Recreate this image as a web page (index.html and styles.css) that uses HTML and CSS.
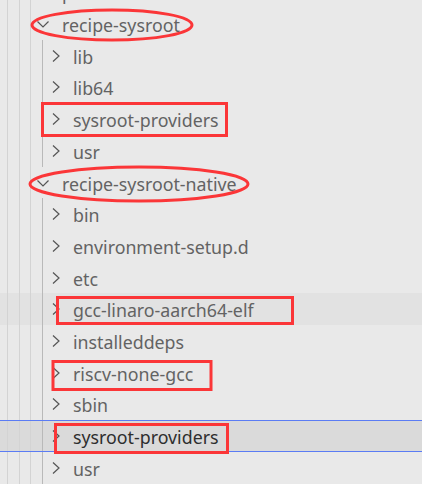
FILE: index.html
```html
<!DOCTYPE html>
<html>
<head>
<meta charset="utf-8">
<link rel="stylesheet" href="styles.css">
</head>
<body>
<div class="explorer">
  <ul class="tree">
    <li class="row d1"><svg class="twist" viewBox="0 0 16 16"><path d="M5 2.5L11 8L5 13.5"/></svg><span class="label">pseudo</span></li>
    <li class="row d1"><svg class="twist" viewBox="0 0 16 16"><path d="M2.5 5.5L8 11L13.5 5.5"/></svg><span class="label">recipe-sysroot</span></li>
    <li class="row d2"><svg class="twist" viewBox="0 0 16 16"><path d="M5 2.5L11 8L5 13.5"/></svg><span class="label">lib</span></li>
    <li class="row d2"><svg class="twist" viewBox="0 0 16 16"><path d="M5 2.5L11 8L5 13.5"/></svg><span class="label">lib64</span></li>
    <li class="row d2"><svg class="twist" viewBox="0 0 16 16"><path d="M5 2.5L11 8L5 13.5"/></svg><span class="label">sysroot-providers</span></li>
    <li class="row d2"><svg class="twist" viewBox="0 0 16 16"><path d="M5 2.5L11 8L5 13.5"/></svg><span class="label">usr</span></li>
    <li class="row d1"><svg class="twist" viewBox="0 0 16 16"><path d="M2.5 5.5L8 11L13.5 5.5"/></svg><span class="label">recipe-sysroot-native</span></li>
    <li class="row d2"><svg class="twist" viewBox="0 0 16 16"><path d="M5 2.5L11 8L5 13.5"/></svg><span class="label">bin</span></li>
    <li class="row d2"><svg class="twist" viewBox="0 0 16 16"><path d="M5 2.5L11 8L5 13.5"/></svg><span class="label">environment-setup.d</span></li>
    <li class="row d2"><svg class="twist" viewBox="0 0 16 16"><path d="M5 2.5L11 8L5 13.5"/></svg><span class="label">etc</span></li>
    <li class="row d2 hover"><svg class="twist" viewBox="0 0 16 16"><path d="M5 2.5L11 8L5 13.5"/></svg><span class="label">gcc-linaro-aarch64-elf</span></li>
    <li class="row d2"><svg class="twist" viewBox="0 0 16 16"><path d="M5 2.5L11 8L5 13.5"/></svg><span class="label">installeddeps</span></li>
    <li class="row d2"><svg class="twist" viewBox="0 0 16 16"><path d="M5 2.5L11 8L5 13.5"/></svg><span class="label">riscv-none-gcc</span></li>
    <li class="row d2"><svg class="twist" viewBox="0 0 16 16"><path d="M5 2.5L11 8L5 13.5"/></svg><span class="label">sbin</span></li>
    <li class="row d2 selected"><svg class="twist" viewBox="0 0 16 16"><path d="M5 2.5L11 8L5 13.5"/></svg><span class="label">sysroot-providers</span></li>
    <li class="row d2"><svg class="twist" viewBox="0 0 16 16"><path d="M5 2.5L11 8L5 13.5"/></svg><span class="label">usr</span></li>
  </ul>
  <svg class="marks" viewBox="0 0 422 484" width="422" height="484">
    <ellipse cx="112" cy="25" rx="80" ry="15"/>
    <ellipse cx="139" cy="184" rx="109" ry="17"/>
    <rect x="42.5" y="103.5" width="184" height="32"/>
    <rect x="57.5" y="297.5" width="235" height="26"/>
    <rect x="53" y="361.5" width="158" height="28"/>
    <rect x="55.5" y="424.5" width="172" height="28"/>
  </svg>
</div>
</body>
</html>
```
FILE: styles.css
```css
html, body {
  margin: 0;
  padding: 0;
  background: #e9e9e9;
}
.explorer {
  position: relative;
  width: 422px;
  height: 484px;
  overflow: hidden;
  font-family: "Noto Sans", "Open Sans", sans-serif;
  font-size: 17.8px;
  color: #636363;
}
.tree {
  list-style: none;
  margin: -23.57px 0 0 0;
  padding: 0;
}
.row {
  display: flex;
  align-items: center;
  height: 31.71px;
  box-sizing: border-box;
  white-space: nowrap;
  background-repeat: no-repeat;
}
.d1 {
  padding-left: 35px;
  background-image:
    linear-gradient(#d3d3d3, #d3d3d3),
    linear-gradient(#d3d3d3, #d3d3d3),
    linear-gradient(#d3d3d3, #d3d3d3);
  background-position: 7px 0, 19px 0, 30px 0;
  background-size: 1px 100%, 1px 100%, 1px 100%;
}
.d2 {
  padding-left: 48px;
  background-image:
    linear-gradient(#d3d3d3, #d3d3d3),
    linear-gradient(#d3d3d3, #d3d3d3),
    linear-gradient(#d3d3d3, #d3d3d3),
    linear-gradient(#b9b9b9, #b9b9b9);
  background-position: 7px 0, 19px 0, 30px 0, 42px 0;
  background-size: 1px 100%, 1px 100%, 1px 100%, 1px 100%;
}
.twist {
  width: 16px;
  height: 16px;
  flex: none;
  fill: none;
  stroke: #555;
  stroke-width: 1.2;
}
.label {
  position: relative;
  top: 1px;
}
.d1 .label {
  margin-left: 11px;
}
.d2 .label {
  margin-left: 9px;
}
.hover {
  background-color: #e2e2e2;
}
.selected {
  background-color: #dadada;
  box-shadow: inset 0 1px 0 #5b7cf4, inset 0 -1px 0 #5b7cf4;
  color: #2e2e2e;
}
.marks {
  position: absolute;
  left: 0;
  top: 0;
  fill: none;
  stroke: #fb3638;
  stroke-width: 3;
  pointer-events: none;
}
```
